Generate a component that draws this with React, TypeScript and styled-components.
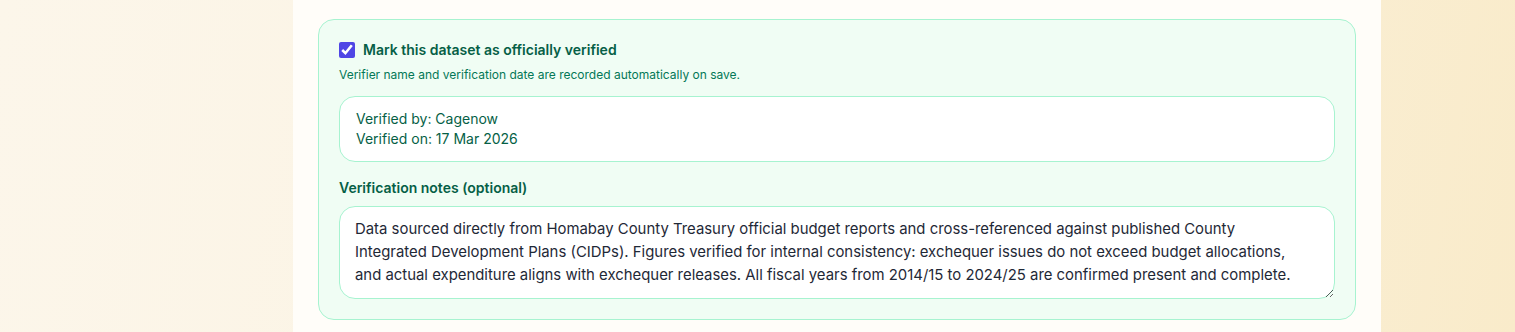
import * as React from "react";
import styled, { createGlobalStyle } from "styled-components";

const GlobalStyle = createGlobalStyle`
	* { box-sizing: border-box; }
	html, body {
		margin: 0;
		padding: 0;
	}
	body {
		font-family: Inter, "Noto Sans", "Liberation Sans", sans-serif;
		background: linear-gradient(100deg, #fcf6ea 0%, #fbf3e2 50%, #f9ebca 100%);
		min-height: 100vh;
		overflow: hidden;
	}
`;

const Page = styled.div`
	display: grid;
	grid-template-columns: 293px 1088px 1fr;
	min-height: 332px;
`;

const Panel = styled.main`
	grid-column: 2;
	background: #fffdf9;
	padding: 19px 25px 24px;
`;

const VerifyCard = styled.section`
	border: 1px solid #a7f3d0;
	background: #f0fdf4;
	border-radius: 16px;
	padding: 20px;
`;

const CheckRow = styled.label`
	display: flex;
	align-items: center;
	gap: 8px;
	height: 20px;
	cursor: pointer;
`;

const Check = styled.input`
	width: 16px;
	height: 16px;
	margin: 0;
	accent-color: #4f46e5;
`;

const CheckTitle = styled.span`
	font-size: 14px;
	line-height: 20px;
	font-weight: 600;
	color: #065f46;
`;

const Hint = styled.p`
	margin: 7px 0 0;
	font-size: 12px;
	line-height: 16px;
	color: #047857;
`;

const InfoBox = styled.div`
	margin-top: 13px;
	background: #ffffff;
	border: 1px solid #a7f3d0;
	border-radius: 16px;
	padding: 12px 16px;
	font-size: 14px;
	line-height: 20px;
	color: #065f46;
`;

const FieldLabel = styled.label`
	display: block;
	margin-top: 16px;
	font-size: 14px;
	line-height: 20px;
	font-weight: 600;
	color: #065f46;
`;

const Notes = styled.textarea`
	display: block;
	width: 100%;
	margin-top: 8px;
	height: 93px;
	padding: 11px 24px 11px 15px;
	border: 1px solid #a7f3d0;
	border-radius: 16px;
	background: #ffffff;
	font-family: inherit;
	font-size: 14.9px;
	line-height: 23px;
	color: #1f2937;
	resize: vertical;
	outline: none;
`;

const notes =
	"Data sourced directly from Homabay County Treasury official budget reports and cross-referenced against published County Integrated Development Plans (CIDPs). Figures verified for internal consistency: exchequer issues do not exceed budget allocations, and actual expenditure aligns with exchequer releases. All fiscal years from 2014/15 to 2024/25 are confirmed present and complete.";

export default function App() {
	const [verified, setVerified] = React.useState(true);
	const [text, setText] = React.useState(notes);

	return (
		<>
			<GlobalStyle />
			<Page>
				<Panel>
					<VerifyCard>
						<CheckRow>
							<Check
								type="checkbox"
								checked={verified}
								onChange={(e) => setVerified(e.target.checked)}
							/>
							<CheckTitle>Mark this dataset as officially verified</CheckTitle>
						</CheckRow>
						<Hint>Verifier name and verification date are recorded automatically on save.</Hint>
						<InfoBox>
							<div>Verified by: Cagenow</div>
							<div>Verified on: 17 Mar 2026</div>
						</InfoBox>
						<FieldLabel htmlFor="notes">Verification notes (optional)</FieldLabel>
						<Notes id="notes" value={text} onChange={(e) => setText(e.target.value)} />
					</VerifyCard>
				</Panel>
			</Page>
		</>
	);
}
